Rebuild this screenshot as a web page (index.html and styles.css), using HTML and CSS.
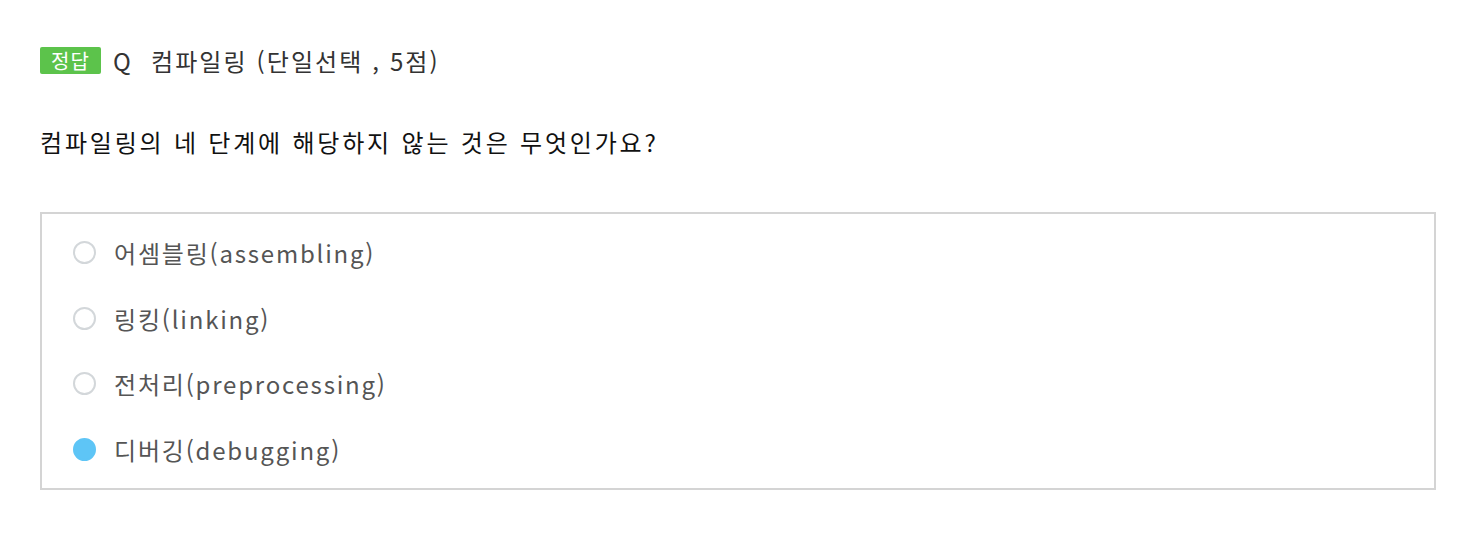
FILE: index.html
```html
<!DOCTYPE html>
<html lang="ko">
<head>
<meta charset="utf-8">
<link rel="stylesheet" href="styles.css">
</head>
<body>
<div class="quiz">
  <div class="title">
    <span class="badge">정답</span>
    <span class="q">Q</span>
    <span class="name">컴파일링 (단일선택 , 5점)</span>
  </div>
  <p class="question">컴파일링의 네 단계에 해당하지 않는 것은 무엇인가요?</p>
  <ul class="options">
    <li class="option"><span class="radio"></span><span class="label">어셈블링(assembling)</span></li>
    <li class="option"><span class="radio"></span><span class="label">링킹(linking)</span></li>
    <li class="option"><span class="radio"></span><span class="label">전처리(preprocessing)</span></li>
    <li class="option"><span class="radio checked"></span><span class="label">디버깅(debugging)</span></li>
  </ul>
</div>
</body>
</html>
```

FILE: styles.css
```css
html, body {
  margin: 0;
  padding: 0;
  background: #ffffff;
}
body {
  font-family: "Noto Sans CJK KR", "Noto Sans", sans-serif;
  color: #222;
}
.quiz {
  padding: 47px 46px 0 40px;
}
.title {
  display: flex;
  align-items: center;
  height: 27px;
  font-size: 24px;
  color: #333;
}
.badge {
  display: inline-flex;
  align-items: center;
  justify-content: center;
  width: 61px;
  height: 27px;
  background: #5cc34b;
  color: #fff;
  font-size: 20px;
  letter-spacing: 1px;
  border-radius: 2px;
}
.q {
  margin-left: 12px;
  width: 38px;
}
.name {
  letter-spacing: 2.1px;
}
.question {
  margin: 51px 0 0 0;
  height: 34px;
  line-height: 34px;
  font-size: 24px;
  letter-spacing: 2.8px;
  color: #111;
}
.options {
  list-style: none;
  margin: 53px 0 0 0;
  padding: 6px 0 6px 0;
  border: 2px solid #d4d4d4;
}
.option {
  display: flex;
  align-items: center;
  height: 65.5px;
  padding-left: 31px;
}
.radio {
  box-sizing: border-box;
  width: 23px;
  height: 23px;
  border-radius: 50%;
  border: 2px solid #d3d7da;
  flex: none;
}
.radio.checked {
  background: #5ec5f6;
  border-color: #5ec5f6;
}
.label {
  margin-left: 18px;
  font-size: 24px;
  letter-spacing: 1.8px;
  color: #555;
}
```
